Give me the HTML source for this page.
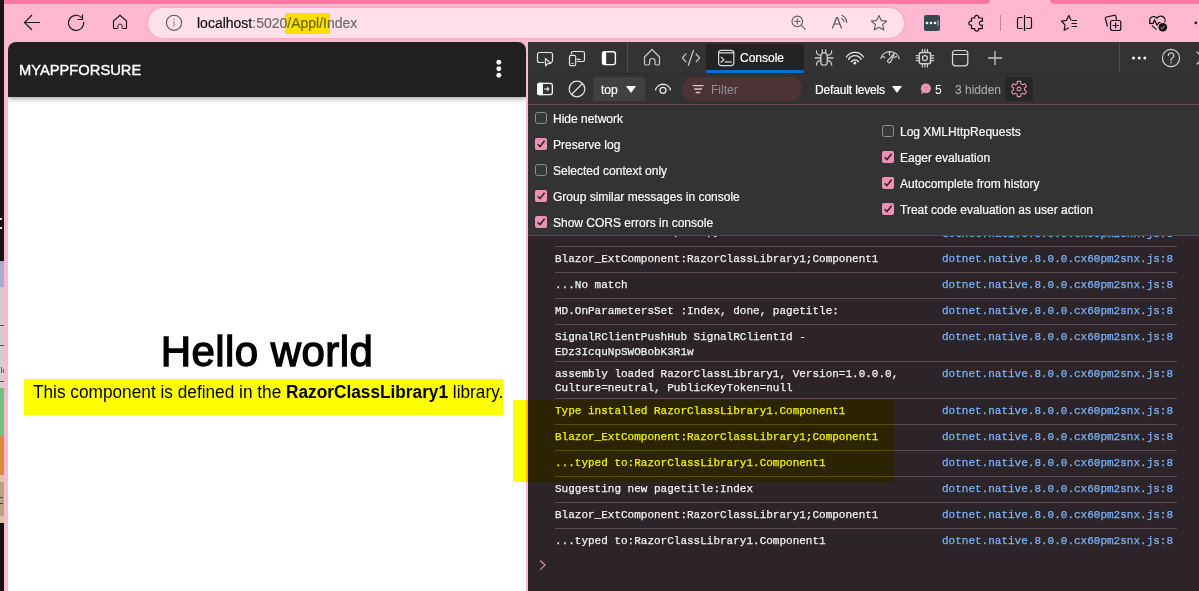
<!DOCTYPE html>
<html><head><meta charset="utf-8">
<style>
*{box-sizing:border-box;margin:0;padding:0}
html,body{width:1199px;height:591px;overflow:hidden;background:#ffb8d0;font-family:"Liberation Sans",sans-serif}
.a{position:absolute}
svg.a{overflow:visible}
.mono{font-family:"Liberation Mono",monospace}
</style></head><body>
<div class="a" style="left:0;top:0;width:1199px;height:591px;background:#ffb8d0"></div>
<!-- left strip other window -->
<div class="a" style="left:0;top:0;width:4px;height:591px;background:#161616"></div>
<div class="a" style="left:0;top:218px;width:2px;height:2px;background:#ddd"></div>
<div class="a" style="left:0;top:227px;width:2px;height:2px;background:#ddd"></div>
<div class="a" style="left:0;top:261px;width:4px;height:26px;background:#a6aec8"></div>
<div class="a" style="left:0;top:287px;width:4px;height:101px;background:#cfcfcf"></div>
<div class="a" style="left:0;top:325px;width:4px;height:1px;background:#555"></div>
<div class="a" style="left:0;top:345px;width:4px;height:1px;background:#555"></div>
<div class="a" style="left:0;top:381px;width:4px;height:1px;background:#555"></div>
<div class="a" style="left:1px;top:367px;width:1px;height:6px;background:#3b5bdb"></div>
<div class="a" style="left:3px;top:369px;width:1px;height:4px;background:#3b5bdb"></div>
<div class="a" style="left:0;top:388px;width:4px;height:48px;background:#6cc27f"></div>
<div class="a" style="left:0;top:436px;width:4px;height:39px;background:#da8c38"></div>
<div class="a" style="left:0;top:475px;width:4px;height:7px;background:#dcc3a5"></div>
<div class="a" style="left:0;top:482px;width:4px;height:34px;background:#b9a284"></div>
<div class="a" style="left:0;top:497px;width:3px;height:1px;background:#444"></div>
<div class="a" style="left:0;top:503px;width:3px;height:1px;background:#444"></div>
<div class="a" style="left:0;top:516px;width:4px;height:7px;background:#dcc3a5"></div>
<div class="a" style="left:0;top:523px;width:4px;height:68px;background:#121212"></div>
<!-- top tab strip -->
<div class="a" style="left:4px;top:0;width:985.5px;height:4px;background:#ff76a4;border-bottom-right-radius:5px"></div>
<div class="a" style="left:1050px;top:0;width:149px;height:4px;background:#ff76a4;border-bottom-left-radius:5px"></div>

<!-- toolbar icons -->
<svg class="a" style="left:0;top:0" width="1199" height="42" fill="none" stroke="#1a1a1a" stroke-width="1.2">
  <!-- back -->
  <path d="M24.5 22.5H40M32 15L24.5 22.5L32 30"/>
  <!-- reload -->
  <path d="M81.75 17.8A7.6 7.6 0 1 0 83.6 21.8"/>
  <path d="M82.5 15V19.5H78.2" stroke-linecap="square"/>
  <!-- home -->
  <path d="M117.7 28.5H114.3A0.8 0.8 0 0 1 113.5 27.7V21L120 15.3L126.5 21V27.7A0.8 0.8 0 0 1 125.7 28.5H122.3"/><path d="M117.8 28.5V26A2.3 2.3 0 0 1 122.3 26V28.5" stroke="#5e4a52"/>
</svg>

<!-- address bar -->
<div class="a" style="left:148px;top:8px;width:756px;height:30px;border-radius:15px;background:#ffdfea;box-shadow:0 0 3px rgba(190,70,110,.28)"></div>
<svg class="a" style="left:0;top:0" width="1199" height="42" fill="none" stroke="#5a5a5a" stroke-width="1.1">
  <circle cx="174" cy="22.8" r="7.6"/>
  <path d="M174 21.3V26.5" stroke-width="1.3" stroke="#999"/>
  <path d="M174 19V20" stroke-width="1.3" stroke="#888"/>
  <!-- zoom -->
  <circle cx="797.3" cy="21.4" r="5.3"/>
  <path d="M801.2 25.3L805.6 29.6"/>
  <path d="M797.3 18.3V24.5M794.2 21.4H800.4" stroke-width="1"/>
  <!-- read aloud A -->
  <path d="M832.3 28.5L836.5 17.7H837.5L841.6 28.5M834.3 24H839.8" stroke-width="1.2"/>
  <path d="M841.2 18.3A5 5 0 0 1 844.3 22.2M841.4 15.3A8 8 0 0 1 846.7 22.8" stroke-width="1.2"/>
  <!-- star -->
  <path stroke-linejoin="round" d="M879 15.5L881.3 20.6L886.7 21.1L882.6 24.7L883.8 30L879 27.2L874.2 30L875.4 24.7L871.3 21.1L876.7 20.6Z"/>
</svg>
<div class="a" style="left:197px;top:14px;font-size:14px;color:#111;white-space:nowrap;line-height:18px;-webkit-text-stroke:0.2px currentColor">localhost<span style="color:#6b6b6b">:5020/Appl/Index</span></div>

<!-- right toolbar icons -->
<div class="a" style="left:924px;top:15px;width:16px;height:16px;border-radius:2px;background:#37474f"></div>
<svg class="a" style="left:0;top:0" width="1199" height="42">
  <circle cx="927" cy="23" r="1.3" fill="#fff"/><circle cx="931" cy="23" r="1.3" fill="#fff"/><circle cx="935" cy="23" r="1.3" fill="#fff"/>
  <path d="M938 20V26" stroke="#aab" stroke-width="1"/>
  <g fill="none" stroke="#111" stroke-width="1.2" stroke-linejoin="round">
    <!-- puzzle -->
    <path d="M971.5 18H974.8A2 2 0 1 1 978.6 18H982.3V21.5A2 2 0 1 0 982.3 25V28.6H978.6A2 2 0 1 1 974.8 28.6H971.5V25A2 2 0 1 1 971.5 21.3Z"/>
    <!-- split -->
    <path d="M1022.5 17.5H1019A1.5 1.5 0 0 0 1017.5 19V27A1.5 1.5 0 0 0 1019 28.5H1022.5M1026 17.5H1030A1.5 1.5 0 0 1 1031.5 19V27A1.5 1.5 0 0 1 1030 28.5H1026M1024.5 15V31"/>
    <!-- favorites -->
    <path d="M1071 20L1068.8 15.5L1066.5 20.3L1061.5 21.2L1065 24.8L1064.2 30.3L1068.8 27.8M1071.5 20.5H1077M1071.5 23.5H1077M1071.5 26.5H1077"/>
    <!-- collections -->
    <path d="M1107.5 26.5L1105.5 19A1.5 1.5 0 0 1 1106.5 17L1114 15.3A1.5 1.5 0 0 1 1116 16.5L1116.5 19.8"/>
    <rect x="1110.5" y="20.5" width="10.3" height="10" rx="2"/>
    <path d="M1115.6 22.5V28.5M1112.6 25.5H1118.6"/>
    <!-- health -->
    <path d="M1150.3 22.8A3.9 3.9 0 1 1 1157 18.3A3.9 3.9 0 1 1 1164.6 22.5"/>
    <path d="M1149 23.3H1153.2L1154.5 19.8L1157 25.2L1158.8 22.6H1160.5"/>
    <path d="M1151.8 25.4L1156.5 29.6"/>
  </g>
  <circle cx="1162.8" cy="27.3" r="4.3" fill="#111"/>
  <path d="M1160.8 27.3L1162.2 28.6L1164.8 26" fill="none" stroke="#ffb8d0" stroke-width="1"/>
  <circle cx="1195.8" cy="22.9" r="1.3" fill="#111"/>
  <path d="M1000.5 15V31" stroke="#b98a9c" stroke-width="1"/>
</svg>
<div class="a" style="left:285px;top:13px;width:45px;height:21px;background:#ffff00;mix-blend-mode:multiply"></div>

<!-- page -->
<div class="a" style="left:8px;top:42px;width:518px;height:549px;background:#fff;border-radius:8px 8px 0 0;overflow:hidden">
  <div class="a" style="left:0;top:0;width:518px;height:54.5px;background:#212121;box-shadow:0 2px 5px rgba(0,0,0,.35)"></div>
  <div class="a" style="left:11px;top:18.5px;font-size:15.4px;line-height:18px;color:#fff;-webkit-text-stroke:0.4px #fff;white-space:nowrap;transform-origin:0 0;transform:scaleX(0.955)">MYAPPFORSURE</div>
  <svg class="a" style="left:0;top:0" width="518" height="60"><circle cx="490.8" cy="20.2" r="2.45" fill="#fff"/><circle cx="490.8" cy="26.8" r="2.45" fill="#fff"/><circle cx="490.8" cy="33.3" r="2.45" fill="#fff"/></svg>
  <div class="a" style="left:0;top:286px;width:518px;text-align:center;font-size:42px;line-height:47px;-webkit-text-stroke:1.3px #000;letter-spacing:0.45px;color:#000;white-space:nowrap">Hello world</div>
  <div class="a" style="left:16px;top:337px;width:479px;height:36px;background:#ffff00"></div>
  <div class="a" style="left:25px;top:340px;font-size:18px;line-height:21px;color:#000;white-space:nowrap;transform-origin:0 0;transform:scaleX(0.958)">This component is defined in the <b>RazorClassLibrary1</b> library.</div>
</div>
<!-- devtools -->
<div class="a" style="left:528px;top:42px;width:671px;height:549px;background:#2c2428"></div>
<div class="a" style="left:528px;top:42px;width:671px;height:31px;background:#333"></div>
<div class="a" style="left:528px;top:73px;width:671px;height:1px;background:#2b2b2b"></div>
<div class="a" style="left:528px;top:74px;width:671px;height:30px;background:#323232"></div>
<div class="a" style="left:528px;top:104px;width:671px;height:1px;background:#6c4c57"></div>
<div class="a" style="left:528px;top:105px;width:671px;height:130px;background:#333"></div>

<!-- devtools toolbar row1 -->
<div class="a" style="left:706px;top:44px;width:98px;height:29px;background:#232323;border-radius:3px 3px 0 0"></div>
<div class="a" style="left:706px;top:70px;width:98px;height:3px;background:#0a6fd1;border-radius:1.5px"></div>
<div class="a" style="left:627px;top:42px;width:1px;height:31px;background:#474b52"></div>
<div class="a" style="left:1119px;top:42px;width:1px;height:31px;background:#474b52"></div>
<svg class="a" style="left:0;top:0" width="1199" height="105" fill="none" stroke="#e6e6e6" stroke-width="1.2" stroke-linecap="round" stroke-linejoin="round">
  <!-- inspect -->
  <path d="M543.7 62.5H539.5A2 2 0 0 1 537.5 60.5V54.5A2 2 0 0 1 539.5 52.5H550.5A2 2 0 0 1 552.5 54.5V60.5A2 2 0 0 1 551.5 62.3"/>
  <path d="M545.4 58.4L550.8 63.3L547.8 63.6L545.6 65.8Z"/>
  <!-- device -->
  <path d="M571.3 53.8V53.3A1.8 1.8 0 0 1 573.1 51.5H582.7A1.8 1.8 0 0 1 584.5 53.3V59.7A1.8 1.8 0 0 1 582.7 61.5H577.3"/>
  <path d="M577.3 59.4H580"/>
  <rect x="569.5" y="55.3" width="6.2" height="10.4" rx="1.5"/>
  <path d="M571.9 63.5H573"/>
  <!-- dock -->
  <rect x="602.5" y="51.7" width="12.9" height="12.9" rx="2.3" stroke-width="1.4" stroke="#fff"/>
  <path d="M602 54A2.5 2.5 0 0 1 604.5 51.2H606.2V65.1H604.5A2.5 2.5 0 0 1 602 62.6Z" fill="#fff" stroke="none"/>
  <!-- home -->
  <path d="M644.5 57L652 49.5L659.5 57V63.8A1.2 1.2 0 0 1 658.3 65H656.2A1.2 1.2 0 0 1 655 63.8V61.2A2.7 2.7 0 0 0 649.6 61.2V63.8A1.2 1.2 0 0 1 648.4 65H645.7A1.2 1.2 0 0 1 644.5 63.8Z" stroke="#c8c8c8"/>
  <!-- code -->
  <path d="M685.9 53.9L682.4 57.9L685.9 61.9M696.1 53.9L699.6 57.9L696.1 61.9M693.5 50.4L688.3 65.3" stroke="#d0d0d0"/>
  <!-- console icon -->
  <rect x="718.6" y="50.4" width="15.2" height="15.2" rx="2.8" stroke="#d8d8d8"/>
  <path d="M718.6 52.9H733.8M721 57.1L723.9 59.7L721 62.3M725.2 61.9H731.2" stroke="#d8d8d8"/>
  <!-- bug -->
  <rect x="820.8" y="52.8" width="6.5" height="12.4" rx="3.25" stroke="#c8c8c8" stroke-width="1.3"/>
  <path d="M822.3 52.6V50M825.7 52.6V50M820.8 55.3A4 4 0 0 1 816.5 50.8M827.3 55.3A4 4 0 0 0 831.6 50.8M820.8 58H815.2M827.3 58H833M820.8 60.7A4 4 0 0 0 816.5 65.2M827.3 60.7A4 4 0 0 1 831.6 65.2" stroke="#c8c8c8" stroke-width="1.3"/>
  <!-- wifi -->
  <path d="M846.4 57A10.25 10.25 0 0 1 863.5 57M848.6 59.4A7.2 7.2 0 0 1 861.2 59.4M851.3 61.7A4.5 4.5 0 0 1 858.6 61.7" stroke-width="1.3" stroke="#eaeaea"/>
  <circle cx="854.9" cy="63.1" r="1.5" fill="#f2f2f2" stroke="none"/>
  <!-- perf -->
  <path d="M880.8 58.5A9.6 9.6 0 0 1 899.2 58.5M889.5 51.3V55M882.8 56.5L884.8 57.6M896.3 56.5L894.2 57.6" stroke="#c8c8c8" stroke-width="1.3"/>
  <path d="M894.5 53.3L890.6 62A1.7 1.7 0 0 1 887.6 60.6Z" stroke="#c8c8c8" stroke-width="1.3"/>
  <!-- cpu -->
  <rect x="919.3" y="52.5" width="11.3" height="11.3" rx="2" stroke="#d0d0d0" stroke-width="1.5"/>
  <circle cx="924.9" cy="58.1" r="2.5" stroke="#d0d0d0" stroke-width="1.3"/>
  <path d="M922.4 52V49.3M924.9 52V49.3M927.4 52V49.3M922.4 64.3V67M924.9 64.3V67M927.4 64.3V67M918.8 55.6H916.2M918.8 58.1H916.2M918.8 60.6H916.2M931.1 55.6H933.7M931.1 58.1H933.7M931.1 60.6H933.7" stroke="#c8c8c8"/>
  <!-- window -->
  <rect x="952.5" y="50.5" width="15.3" height="15.3" rx="3" stroke="#d8d8d8"/>
  <path d="M952.5 54.5H967.8" stroke="#d8d8d8"/>
  <!-- plus -->
  <path d="M995 51V65M988 58H1002" stroke-width="1.3" stroke="#c8c8c8" stroke-linecap="butt"/>
  <!-- help -->
  <circle cx="1171" cy="58" r="8.6" stroke="#d0d0d0"/>
  <path d="M1168.3 55.6A2.7 2.7 0 1 1 1172.3 58C1171.4 58.5 1171 59 1171 60V60.6" stroke="#d0d0d0"/>
  <circle cx="1171" cy="62.7" r="0.8" fill="#d0d0d0" stroke="none"/>
  <path d="M1197 52L1203 58M1197 64L1203 58" stroke="#d0d0d0"/>
</svg>
<div class="a" style="left:740px;top:51px;font-size:12px;line-height:14px;color:#fff;-webkit-text-stroke:0.2px currentColor">Console</div>
<svg class="a" style="left:0;top:0" width="1199" height="105">
  <circle cx="1133.5" cy="58" r="1.5" fill="#fff"/><circle cx="1139.2" cy="58" r="1.5" fill="#fff"/><circle cx="1144.8" cy="58" r="1.5" fill="#fff"/>
</svg>

<!-- devtools toolbar row2 -->
<div class="a" style="left:593px;top:77px;width:52px;height:24px;background:#414141;border-radius:2px"></div>
<div class="a" style="left:682px;top:77px;width:120px;height:24px;background:#4d3238;border-radius:12px"></div>
<div class="a" style="left:1005px;top:77px;width:28px;height:24px;background:#262626;border-radius:2px"></div>
<svg class="a" style="left:0;top:0" width="1199" height="105" fill="none" stroke="#e6e6e6" stroke-width="1.1">
  <!-- sidebar -->
  <rect x="537.65" y="83.4" width="14.7" height="11.2" rx="2" stroke-width="1.3" stroke="#f4f4f4"/>
  <path d="M537 85.5A2.5 2.5 0 0 1 539.5 82.75H543V95.25H539.5A2.5 2.5 0 0 1 537 92.5Z" fill="#fff" stroke="none"/>
  <path d="M544.3 89H547.5" stroke="#bdbdbd" stroke-width="1.6" stroke-linecap="butt"/><path d="M547 86.4L549.9 89L547 91.6Z" fill="#d8d8d8" stroke="none"/>
  <!-- clear -->
  <circle cx="577" cy="89" r="7.8" stroke-width="1.2"/>
  <path d="M582.5 83.5L571.5 94.5" stroke-width="1.2"/>
  <!-- eye -->
  <path d="M655.4 90.3A7.8 7.8 0 0 1 670.6 90.3" stroke-width="1.3"/>
  <circle cx="663" cy="90.3" r="3" stroke-width="1.3"/>
  <!-- filter icon -->
  <path d="M692.7 85.6H703.5M694.3 89H702M695.7 92.5H700.2" stroke="#dcc2cb" stroke-width="1.3"/>
  <!-- gear -->
  <path d="M1017.38 81.37 L1020.62 81.37 L1020.92 83.74 L1022.60 84.71 L1024.80 83.78 L1026.42 86.59 L1024.51 88.03 L1024.51 89.97 L1026.42 91.41 L1024.80 94.22 L1022.60 93.29 L1020.92 94.26 L1020.62 96.63 L1017.38 96.63 L1017.08 94.26 L1015.40 93.29 L1013.20 94.22 L1011.58 91.41 L1013.49 89.97 L1013.49 88.03 L1011.58 86.59 L1013.20 83.78 L1015.40 84.71 L1017.08 83.74Z" stroke="#e391b3" stroke-linejoin="round"/>
  <circle cx="1019" cy="89" r="1.9" stroke="#e391b3"/>
</svg>
<svg class="a" style="left:0;top:0" width="1199" height="105">
  <path d="M626 86H636L631 93Z" fill="#fff"/>
  <path d="M892 86H902L897 93Z" fill="#fff"/>
  <path d="M926.2 83.6A4.8 4.8 0 1 1 923.8 92.6L921.2 94.2L921.8 91.3A4.8 4.8 0 0 1 926.2 83.6Z" fill="#e899b7"/><path d="M924.6 87.6H927.6M925.4 89.4H926.8" stroke="#c07090" stroke-width="0.8"/>
</svg>
<div class="a" style="left:601px;top:83px;font-size:12px;line-height:14px;color:#fff;-webkit-text-stroke:0.2px currentColor">top</div>
<div class="a" style="left:711px;top:83px;font-size:12px;line-height:14px;color:#8f8f99">Filter</div>
<div class="a" style="left:815px;top:83px;font-size:12px;line-height:14px;color:#fff;letter-spacing:-0.15px;-webkit-text-stroke:0.2px currentColor">Default levels</div>
<div class="a" style="left:935px;top:83px;font-size:12px;line-height:14px;color:#fff">5</div>
<div class="a" style="left:955px;top:83px;font-size:12px;line-height:14px;color:#a8a8a8;-webkit-text-stroke:0.1px currentColor">3 hidden</div>

<!-- console -->
<div class="a mono" style="left:555px;top:225px;font-size:11.5px;line-height:13px;transform-origin:0 0;transform:scaleX(0.9565);white-space:pre;-webkit-text-stroke:0.25px currentColor;color:#f2f2f2">                  ,    ,y</div>
<div class="a mono" style="left:942px;top:227px;font-size:11.5px;line-height:13px;transform-origin:0 0;transform:scaleX(0.9565);white-space:pre;-webkit-text-stroke:0.25px currentColor;color:#7db3f7">dotnet.native.8.0.0.cx60pm2snx.js:8</div>
<div class="a" style="left:555px;top:246px;width:622px;height:1px;background:#5b4a52"></div>
<div class="a mono" style="left:555px;top:252px;font-size:11.5px;line-height:13px;transform-origin:0 0;transform:scaleX(0.9565);white-space:pre;-webkit-text-stroke:0.25px currentColor;color:#f2f2f2">Blazor_ExtComponent:RazorClassLibrary1;Component1</div>
<div class="a mono" style="left:942px;top:252px;font-size:11.5px;line-height:13px;transform-origin:0 0;transform:scaleX(0.9565);white-space:pre;-webkit-text-stroke:0.25px currentColor;color:#7db3f7">dotnet.native.8.0.0.cx60pm2snx.js:8</div>
<div class="a" style="left:555px;top:272px;width:622px;height:1px;background:#5b4a52"></div>
<div class="a mono" style="left:555px;top:278px;font-size:11.5px;line-height:13px;transform-origin:0 0;transform:scaleX(0.9565);white-space:pre;-webkit-text-stroke:0.25px currentColor;color:#f2f2f2">...No match</div>
<div class="a mono" style="left:942px;top:278px;font-size:11.5px;line-height:13px;transform-origin:0 0;transform:scaleX(0.9565);white-space:pre;-webkit-text-stroke:0.25px currentColor;color:#7db3f7">dotnet.native.8.0.0.cx60pm2snx.js:8</div>
<div class="a" style="left:555px;top:298px;width:622px;height:1px;background:#5b4a52"></div>
<div class="a mono" style="left:555px;top:304px;font-size:11.5px;line-height:13px;transform-origin:0 0;transform:scaleX(0.9565);white-space:pre;-webkit-text-stroke:0.25px currentColor;color:#f2f2f2">MD.OnParametersSet :Index, done, pagetitle:</div>
<div class="a mono" style="left:942px;top:304px;font-size:11.5px;line-height:13px;transform-origin:0 0;transform:scaleX(0.9565);white-space:pre;-webkit-text-stroke:0.25px currentColor;color:#7db3f7">dotnet.native.8.0.0.cx60pm2snx.js:8</div>
<div class="a" style="left:555px;top:324px;width:622px;height:1px;background:#5b4a52"></div>
<div class="a mono" style="left:555px;top:330px;font-size:11.5px;line-height:13px;transform-origin:0 0;transform:scaleX(0.9565);white-space:pre;-webkit-text-stroke:0.25px currentColor;color:#f2f2f2">SignalRClientPushHub SignalRClientId -</div>
<div class="a mono" style="left:555px;top:345px;font-size:11.5px;line-height:13px;transform-origin:0 0;transform:scaleX(0.9565);white-space:pre;-webkit-text-stroke:0.25px currentColor;color:#f2f2f2">EDz3IcquNpSWOBobK3R1w</div>
<div class="a mono" style="left:942px;top:330px;font-size:11.5px;line-height:13px;transform-origin:0 0;transform:scaleX(0.9565);white-space:pre;-webkit-text-stroke:0.25px currentColor;color:#7db3f7">dotnet.native.8.0.0.cx60pm2snx.js:8</div>
<div class="a" style="left:555px;top:361px;width:622px;height:1px;background:#5b4a52"></div>
<div class="a mono" style="left:555px;top:367px;font-size:11.5px;line-height:13px;transform-origin:0 0;transform:scaleX(0.9565);white-space:pre;-webkit-text-stroke:0.25px currentColor;color:#f2f2f2">assembly loaded RazorClassLibrary1, Version=1.0.0.0,</div>
<div class="a mono" style="left:555px;top:381px;font-size:11.5px;line-height:13px;transform-origin:0 0;transform:scaleX(0.9565);white-space:pre;-webkit-text-stroke:0.25px currentColor;color:#f2f2f2">Culture=neutral, PublicKeyToken=null</div>
<div class="a mono" style="left:942px;top:367px;font-size:11.5px;line-height:13px;transform-origin:0 0;transform:scaleX(0.9565);white-space:pre;-webkit-text-stroke:0.25px currentColor;color:#7db3f7">dotnet.native.8.0.0.cx60pm2snx.js:8</div>
<div class="a" style="left:555px;top:398px;width:622px;height:1px;background:#5b4a52"></div>
<div class="a mono" style="left:555px;top:404px;font-size:11.5px;line-height:13px;transform-origin:0 0;transform:scaleX(0.9565);white-space:pre;-webkit-text-stroke:0.25px currentColor;color:#f2f2f2">Type installed RazorClassLibrary1.Component1</div>
<div class="a mono" style="left:942px;top:404px;font-size:11.5px;line-height:13px;transform-origin:0 0;transform:scaleX(0.9565);white-space:pre;-webkit-text-stroke:0.25px currentColor;color:#7db3f7">dotnet.native.8.0.0.cx60pm2snx.js:8</div>
<div class="a" style="left:555px;top:424px;width:622px;height:1px;background:#5b4a52"></div>
<div class="a mono" style="left:555px;top:430px;font-size:11.5px;line-height:13px;transform-origin:0 0;transform:scaleX(0.9565);white-space:pre;-webkit-text-stroke:0.25px currentColor;color:#f2f2f2">Blazor_ExtComponent:RazorClassLibrary1;Component1</div>
<div class="a mono" style="left:942px;top:430px;font-size:11.5px;line-height:13px;transform-origin:0 0;transform:scaleX(0.9565);white-space:pre;-webkit-text-stroke:0.25px currentColor;color:#7db3f7">dotnet.native.8.0.0.cx60pm2snx.js:8</div>
<div class="a" style="left:555px;top:450px;width:622px;height:1px;background:#5b4a52"></div>
<div class="a mono" style="left:555px;top:456px;font-size:11.5px;line-height:13px;transform-origin:0 0;transform:scaleX(0.9565);white-space:pre;-webkit-text-stroke:0.25px currentColor;color:#f2f2f2">...typed to:RazorClassLibrary1.Component1</div>
<div class="a mono" style="left:942px;top:456px;font-size:11.5px;line-height:13px;transform-origin:0 0;transform:scaleX(0.9565);white-space:pre;-webkit-text-stroke:0.25px currentColor;color:#7db3f7">dotnet.native.8.0.0.cx60pm2snx.js:8</div>
<div class="a" style="left:555px;top:476px;width:622px;height:1px;background:#5b4a52"></div>
<div class="a mono" style="left:555px;top:482px;font-size:11.5px;line-height:13px;transform-origin:0 0;transform:scaleX(0.9565);white-space:pre;-webkit-text-stroke:0.25px currentColor;color:#f2f2f2">Suggesting new pagetitle:Index</div>
<div class="a mono" style="left:942px;top:482px;font-size:11.5px;line-height:13px;transform-origin:0 0;transform:scaleX(0.9565);white-space:pre;-webkit-text-stroke:0.25px currentColor;color:#7db3f7">dotnet.native.8.0.0.cx60pm2snx.js:8</div>
<div class="a" style="left:555px;top:502px;width:622px;height:1px;background:#5b4a52"></div>
<div class="a mono" style="left:555px;top:508px;font-size:11.5px;line-height:13px;transform-origin:0 0;transform:scaleX(0.9565);white-space:pre;-webkit-text-stroke:0.25px currentColor;color:#f2f2f2">Blazor_ExtComponent:RazorClassLibrary1;Component1</div>
<div class="a mono" style="left:942px;top:508px;font-size:11.5px;line-height:13px;transform-origin:0 0;transform:scaleX(0.9565);white-space:pre;-webkit-text-stroke:0.25px currentColor;color:#7db3f7">dotnet.native.8.0.0.cx60pm2snx.js:8</div>
<div class="a" style="left:555px;top:528px;width:622px;height:1px;background:#5b4a52"></div>
<div class="a mono" style="left:555px;top:534px;font-size:11.5px;line-height:13px;transform-origin:0 0;transform:scaleX(0.9565);white-space:pre;-webkit-text-stroke:0.25px currentColor;color:#f2f2f2">...typed to:RazorClassLibrary1.Component1</div>
<div class="a mono" style="left:942px;top:534px;font-size:11.5px;line-height:13px;transform-origin:0 0;transform:scaleX(0.9565);white-space:pre;-webkit-text-stroke:0.25px currentColor;color:#7db3f7">dotnet.native.8.0.0.cx60pm2snx.js:8</div>
<svg class="a" style="left:0;top:0" width="1199" height="591"><path d="M540.3 560.5L545 565.1L540.3 569.6" fill="none" stroke="#e48fb2" stroke-width="1.2"/></svg>
<div class="a" style="left:528px;top:105px;width:671px;height:130px;background:#333"></div>
<!-- settings pane -->
<div class="a" style="left:528px;top:235px;width:671px;height:1px;background:#5a4650"></div>
<svg class="a" style="left:0;top:0" width="1199" height="240">
  <g fill="#383838" stroke="#8f8f8f" stroke-width="1">
    <rect x="535.5" y="112.5" width="11" height="11" rx="2"/>
    <rect x="535.5" y="164.5" width="11" height="11" rx="2"/>
    <rect x="882.5" y="125.5" width="11" height="11" rx="2"/>
  </g>
  <g fill="#ee90b4">
    <rect x="535" y="138" width="12" height="12" rx="2"/>
    <rect x="535" y="190" width="12" height="12" rx="2"/>
    <rect x="535" y="216" width="12" height="12" rx="2"/>
    <rect x="882" y="151" width="12" height="12" rx="2"/>
    <rect x="882" y="177" width="12" height="12" rx="2"/>
    <rect x="882" y="203" width="12" height="12" rx="2"/>
  </g>
  <g fill="none" stroke="#2b2b2b" stroke-width="1.6">
    <path d="M537.6 144.2L540 146.6L544.6 140.8"/>
    <path d="M537.6 196.2L540 198.6L544.6 192.8"/>
    <path d="M537.6 222.2L540 224.6L544.6 218.8"/>
    <path d="M884.6 157.2L887 159.6L891.6 153.8"/>
    <path d="M884.6 183.2L887 185.6L891.6 179.8"/>
    <path d="M884.6 209.2L887 211.6L891.6 205.8"/>
  </g>
</svg>
<div class="a" style="left:553px;top:112px;font-size:12px;line-height:14px;color:#fafafa;-webkit-text-stroke:0.2px #fafafa">Hide network</div>
<div class="a" style="left:553px;top:138px;font-size:12px;line-height:14px;color:#fafafa;-webkit-text-stroke:0.2px #fafafa">Preserve log</div>
<div class="a" style="left:553px;top:164px;font-size:12px;line-height:14px;color:#fafafa;-webkit-text-stroke:0.2px #fafafa">Selected context only</div>
<div class="a" style="left:553px;top:190px;font-size:12px;line-height:14px;color:#fafafa;-webkit-text-stroke:0.2px #fafafa">Group similar messages in console</div>
<div class="a" style="left:553px;top:216px;font-size:12px;line-height:14px;color:#fafafa;-webkit-text-stroke:0.2px #fafafa">Show CORS errors in console</div>
<div class="a" style="left:900px;top:125px;font-size:12px;line-height:14px;color:#fafafa;-webkit-text-stroke:0.2px #fafafa">Log XMLHttpRequests</div>
<div class="a" style="left:900px;top:151px;font-size:12px;line-height:14px;color:#fafafa;-webkit-text-stroke:0.2px #fafafa">Eager evaluation</div>
<div class="a" style="left:900px;top:177px;font-size:12px;line-height:14px;color:#fafafa;-webkit-text-stroke:0.2px #fafafa">Autocomplete from history</div>
<div class="a" style="left:900px;top:203px;font-size:12px;line-height:14px;color:#fafafa;-webkit-text-stroke:0.2px #fafafa">Treat code evaluation as user action</div>
<div class="a" style="left:513px;top:400px;width:381px;height:82px;background:#ffff00;mix-blend-mode:multiply"></div>
</body></html>
